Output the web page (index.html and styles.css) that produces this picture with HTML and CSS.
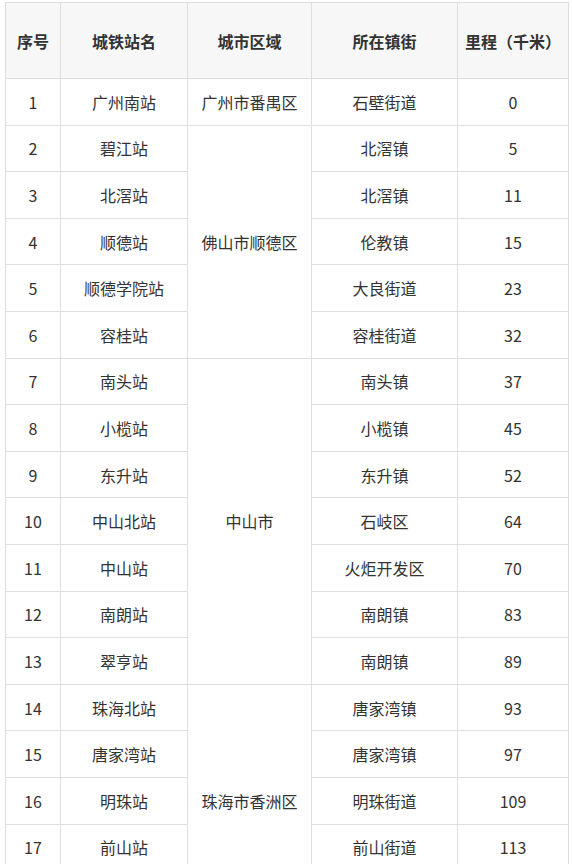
FILE: index.html
```html
<!DOCTYPE html>
<html lang="zh">
<head>
<meta charset="utf-8">
<link rel="stylesheet" href="styles.css">
</head>
<body>
<table class="rail">
  <colgroup>
    <col class="c1"><col class="c2"><col class="c3"><col class="c4"><col class="c5">
  </colgroup>
  <thead>
    <tr><th>序号</th><th>城铁站名</th><th>城市区域</th><th>所在镇街</th><th>里程（千米）</th></tr>
  </thead>
  <tbody>
    <tr><td>1</td><td>广州南站</td><td>广州市番禺区</td><td>石壁街道</td><td>0</td></tr>
    <tr><td>2</td><td>碧江站</td><td rowspan="5">佛山市顺德区</td><td>北滘镇</td><td>5</td></tr>
    <tr><td>3</td><td>北滘站</td><td>北滘镇</td><td>11</td></tr>
    <tr><td>4</td><td>顺德站</td><td>伦教镇</td><td>15</td></tr>
    <tr><td>5</td><td>顺德学院站</td><td>大良街道</td><td>23</td></tr>
    <tr><td>6</td><td>容桂站</td><td>容桂街道</td><td>32</td></tr>
    <tr><td>7</td><td>南头站</td><td rowspan="7">中山市</td><td>南头镇</td><td>37</td></tr>
    <tr><td>8</td><td>小榄站</td><td>小榄镇</td><td>45</td></tr>
    <tr><td>9</td><td>东升站</td><td>东升镇</td><td>52</td></tr>
    <tr><td>10</td><td>中山北站</td><td>石岐区</td><td>64</td></tr>
    <tr><td>11</td><td>中山站</td><td>火炬开发区</td><td>70</td></tr>
    <tr><td>12</td><td>南朗站</td><td>南朗镇</td><td>83</td></tr>
    <tr><td>13</td><td>翠亨站</td><td>南朗镇</td><td>89</td></tr>
    <tr><td>14</td><td>珠海北站</td><td rowspan="5">珠海市香洲区</td><td>唐家湾镇</td><td>93</td></tr>
    <tr><td>15</td><td>唐家湾站</td><td>唐家湾镇</td><td>97</td></tr>
    <tr><td>16</td><td>明珠站</td><td>明珠街道</td><td>109</td></tr>
    <tr><td>17</td><td>前山站</td><td>前山街道</td><td>113</td></tr>
    <tr><td>18</td><td>珠海站</td><td>拱北街道</td><td>116</td></tr>
  </tbody>
</table>
</body>
</html>
```
FILE: styles.css
```css
html, body {
  margin: 0;
  background: #fff;
}
body {
  padding: 2px 0 0 5px;
  font-family: "Noto Sans CJK SC", "Noto Sans", sans-serif;
  color: #333;
}
.rail {
  border-collapse: collapse;
  table-layout: fixed;
  width: 563px;
  font-size: 16px;
}
.c1 { width: 55px; }
.c2 { width: 127px; }
.c3 { width: 124px; }
.c4 { width: 146px; }
.c5 { width: 111px; }
.rail th, .rail td {
  border: 1px solid #dedede;
  text-align: center;
  vertical-align: middle;
  padding: 0;
  line-height: 20px;
}
.rail th {
  height: 75px;
  background: #f7f7f7;
  font-weight: bold;
  color: #333;
}
.rail td {
  height: 45.6px;
}
```
